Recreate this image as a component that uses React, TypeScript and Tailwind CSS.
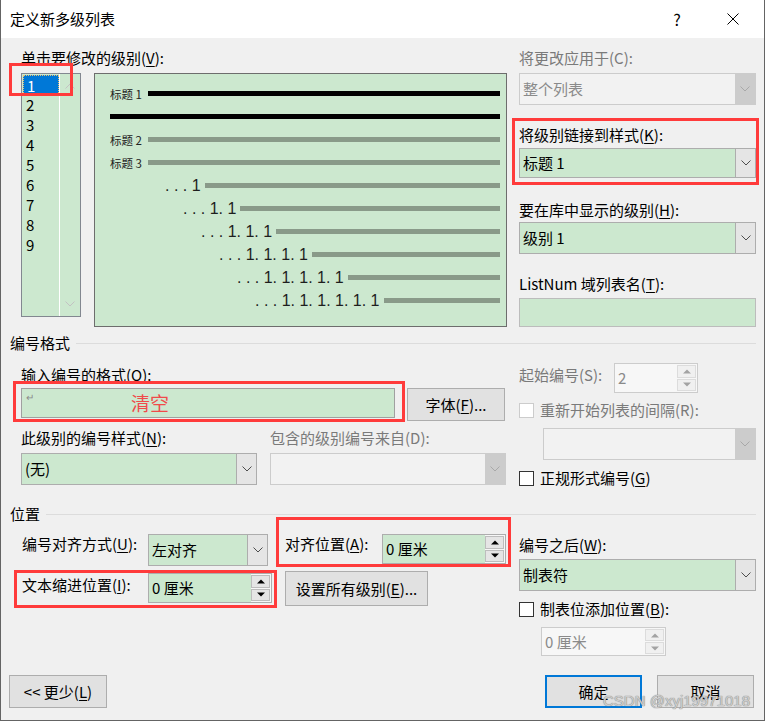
import React from 'react';

const Acc = ({ k }: { k: string }) => (
  <>
    (<span className="underline underline-offset-[2px] decoration-1">{k}</span>)
  </>
);

function Chevron({ c = '#4d4d4d' }: { c?: string }) {
  return (
    <svg width="10" height="6" viewBox="0 0 10 6" fill="none">
      <path d="M0.5 0.5L5 5L9.5 0.5" stroke={c} strokeWidth="1" />
    </svg>
  );
}

function Tri({ up, c }: { up?: boolean; c: string }) {
  return (
    <svg width="8" height="5" viewBox="0 0 8 5">
      <path d={up ? 'M0 4.5L4 0.5L8 4.5Z' : 'M0 0.5L4 4.5L8 0.5Z'} fill={c} />
    </svg>
  );
}

function Red({ className = '' }: { className?: string }) {
  return <span className={`absolute border-[3px] border-[#ff3b3b] pointer-events-none ${className}`} />;
}

function Combo({ text = '', className = '', disabled = false }: { text?: string; className?: string; disabled?: boolean }) {
  return (
    <div
      className={`flex border ${
        disabled ? 'border-[#cccccc] bg-[#f2f2f2] text-[#8a8a8a]' : 'border-[#adadad] bg-[#cce8cf] text-black'
      } ${className}`}
    >
      <div className="flex-1 flex items-center pl-[3px] text-[15px]">{text}</div>
      <div
        className={`w-[20px] flex items-center justify-center ${
          disabled ? 'bg-[#cccccc]' : 'bg-[#e5e5e5] border-l border-[#adadad]'
        }`}
      >
        <Chevron c={disabled ? '#a8a8a8' : '#4d4d4d'} />
      </div>
    </div>
  );
}

function Spin({ text = '', className = '', disabled = false }: { text?: string; className?: string; disabled?: boolean }) {
  const c = disabled ? '#a3a3a3' : '#000000';
  return (
    <div
      className={`flex border ${
        disabled ? 'border-[#cccccc] bg-[#f7f7f7] text-[#8a8a8a]' : 'border-[#adadad] bg-[#cce8cf] text-black'
      } ${className}`}
    >
      <div className="flex-1 flex items-center pl-[3px] text-[15px]">{text}</div>
      <div className="w-[20px] flex flex-col gap-px py-px pr-px bg-[#f7f7f7]">
        <div
          className={`flex-1 flex items-center justify-center border ${
            disabled ? 'border-[#dcdcdc] bg-[#f0f0f0]' : 'border-[#bdbdbd] bg-[#e5e5e5]'
          }`}
        >
          <Tri up c={c} />
        </div>
        <div
          className={`flex-1 flex items-center justify-center border ${
            disabled ? 'border-[#dcdcdc] bg-[#f0f0f0]' : 'border-[#bdbdbd] bg-[#e5e5e5]'
          }`}
        >
          <Tri c={c} />
        </div>
      </div>
    </div>
  );
}

function Check({ disabled = false }: { disabled?: boolean }) {
  return (
    <span
      className={`w-[15px] h-[15px] shrink-0 bg-white border ${disabled ? 'border-[#cccccc]' : 'border-[#333333]'}`}
    />
  );
}

function Btn({ children, className = '', primary = false }: { children: React.ReactNode; className?: string; primary?: boolean }) {
  return (
    <div
      className={`flex items-center justify-center bg-[#e1e1e1] text-[15px] ${
        primary ? 'border-2 border-[#0078d7]' : 'border border-[#adadad]'
      } ${className}`}
    >
      {children}
    </div>
  );
}

function SectionHead({ title, className = '' }: { title: string; className?: string }) {
  return (
    <div className={`h-[20px] flex items-center ${className}`}>
      <span>{title}</span>
      <div className="flex-1 h-px bg-[#dcdcdc] ml-[6px]" />
    </div>
  );
}

function LevelList() {
  const items = ['1', '2', '3', '4', '5', '6', '7', '8', '9'];
  return (
    <div className="relative w-[60px] h-[244px] shrink-0 border border-[#828790] bg-[#cce8cf] flex">
      <div className="w-[37px] flex flex-col pt-px pl-px">
        {items.map((n, i) => (
          <div
            key={n}
            className={`h-[20px] pl-[3px] text-[15px] leading-[20px] ${
              i === 0 ? 'bg-[#0078d7] text-white border border-dotted border-[#e8c070] pl-[2px] leading-[18px]' : 'text-black'
            }`}
          >
            {n}
          </div>
        ))}
      </div>
      <div className="w-px bg-white" />
      <div className="flex-1 flex flex-col items-center justify-between py-[9px]">
        <svg width="10" height="6" viewBox="0 0 10 6" fill="none">
          <path d="M0.5 5.5L5 1L9.5 5.5" stroke="#c2c2c2" strokeWidth="1" />
        </svg>
        <Chevron c="#c2c2c2" />
      </div>
      <Red className="-left-[13px] -top-[11px] w-[64px] h-[33px]" />
    </div>
  );
}

function Preview() {
  const dotted = "font-['Liberation_Sans',sans-serif] text-[16px] text-[#1e1e1e] mr-[4px] whitespace-pre";
  return (
    <div className="ml-[13px] w-[413px] h-[254px] shrink-0 border border-[#6d6d6d] bg-[#cce8cf] pt-[8px] pl-[15px] pr-[6px] flex flex-col">
      <div className="h-[23px] flex items-center">
        <span className="w-[38px] shrink-0 text-[11.5px] text-[#222]">标题 1</span>
        <div className="flex-1 h-[5px] bg-black" />
      </div>
      <div className="h-[23px] flex items-center">
        <div className="flex-1 h-[5px] bg-black" />
      </div>
      <div className="h-[23px] flex items-center">
        <span className="w-[38px] shrink-0 text-[11.5px] text-[#222]">标题 2</span>
        <div className="flex-1 h-[5px] bg-[#899a89]" />
      </div>
      <div className="h-[23px] flex items-center">
        <span className="w-[38px] shrink-0 text-[11.5px] text-[#222]">标题 3</span>
        <div className="flex-1 h-[5px] bg-[#899a89]" />
      </div>
      <div className="h-[23px] flex items-center">
        <span className={`ml-[55px] ${dotted}`}>. . . 1</span>
        <div className="flex-1 h-[5px] bg-[#899a89]" />
      </div>
      <div className="h-[23px] flex items-center">
        <span className={`ml-[73px] ${dotted}`}>. . . 1. 1</span>
        <div className="flex-1 h-[5px] bg-[#899a89]" />
      </div>
      <div className="h-[23px] flex items-center">
        <span className={`ml-[91px] ${dotted}`}>. . . 1. 1. 1</span>
        <div className="flex-1 h-[5px] bg-[#899a89]" />
      </div>
      <div className="h-[23px] flex items-center">
        <span className={`ml-[109px] ${dotted}`}>. . . 1. 1. 1. 1</span>
        <div className="flex-1 h-[5px] bg-[#899a89]" />
      </div>
      <div className="h-[23px] flex items-center">
        <span className={`ml-[127px] ${dotted}`}>. . . 1. 1. 1. 1. 1</span>
        <div className="flex-1 h-[5px] bg-[#899a89]" />
      </div>
      <div className="h-[23px] flex items-center">
        <span className={`ml-[145px] ${dotted}`}>. . . 1. 1. 1. 1. 1. 1</span>
        <div className="flex-1 h-[5px] bg-[#899a89]" />
      </div>
    </div>
  );
}

export default function App() {
  return (
    <div className="relative w-[765px] h-[721px] bg-[#f0f0f0] border-x border-b border-[#646464] flex flex-col text-[15px] leading-[20px] text-black font-['Noto_Sans_CJK_SC',sans-serif]">
      {/* title bar */}
      <div className="h-[38px] shrink-0 bg-white flex items-center pl-[9px]">
        <span>定义新多级列表</span>
        <span className="ml-auto w-[20px] text-center text-[16px]">?</span>
        <svg className="ml-[40px] mr-[25px]" width="12" height="12" viewBox="0 0 12 12">
          <path d="M0.5 0.5L11.5 11.5M11.5 0.5L0.5 11.5" stroke="#000" strokeWidth="1" />
        </svg>
      </div>

      <div className="flex-1 flex flex-col pl-[9px] pr-[8px]">
        {/* levels + preview + link */}
        <div className="flex pl-[11px]">
          <div className="flex flex-col">
            <div className="mt-[10px] h-[20px]">
              单击要修改的级别<Acc k="V" />:
            </div>
            <div className="flex items-start mt-[5px]">
              <LevelList />
              <Preview />
            </div>
          </div>
          <div className="ml-auto w-[237px] flex flex-col">
            <div className="mt-[10px] h-[20px] text-[#7a7a7a]">将更改应用于(C):</div>
            <Combo disabled text="整个列表" className="mt-[5px] h-[32px]" />
            <div className="relative mt-[20px] flex flex-col">
              <div className="h-[20px]">
                将级别链接到样式<Acc k="K" />:
              </div>
              <Combo text="标题 1" className="mt-[3px] h-[30px]" />
              <Red className="-left-[7px] -right-[3px] -top-[7px] -bottom-[7px]" />
            </div>
            <div className="mt-[22px] h-[20px]">
              要在库中显示的级别<Acc k="H" />:
            </div>
            <Combo text="级别 1" className="mt-[2px] h-[32px]" />
            <div className="mt-[20px] h-[20px]">
              ListNum 域列表名<Acc k="T" />:
            </div>
            <div className="mt-[4px] h-[29px] border border-[#bcbcbc] bg-[#cce8cf]" />
          </div>
        </div>

        {/* 编号格式 */}
        <SectionHead title="编号格式" className="mt-[6px]" />
        <div className="flex items-start pl-[11px]">
          <div className="w-[486px] flex flex-col">
            <div className="mt-[12px] h-[20px]">
              输入编号的格式<Acc k="O" />:
            </div>
            <div className="mt-[3px] flex items-start">
              <div className="relative">
                <div className="w-[374px] h-[30px] border border-[#a0a0a0] bg-[#cce8cf] flex items-center">
                  <span className="self-start mt-[2px] ml-[4px] text-[10px] leading-[12px] text-[#8a8a8a]">↵</span>
                  <span className="ml-[97px] text-[19px] text-[#f04a4a]">清空</span>
                </div>
                <Red className="-left-[8px] -top-[7px] -right-[10px] -bottom-[4px]" />
              </div>
              <Btn className="ml-[12px] w-[98px] h-[33px]">
                字体<Acc k="F" />...
              </Btn>
            </div>
            <div className="mt-[7px] flex h-[20px]">
              <div className="w-[249px]">
                此级别的编号样式<Acc k="N" />:
              </div>
              <div className="text-[#7a7a7a]">包含的级别编号来自(D):</div>
            </div>
            <div className="mt-[5px] flex">
              <Combo text="(无)" className="w-[236px] h-[32px]" />
              <Combo disabled className="ml-[13px] w-[236px] h-[32px]" />
            </div>
          </div>
          <div className="ml-auto w-[237px] flex flex-col">
            <div className="mt-[10px] h-[30px] flex items-center">
              <span className="w-[95px] mb-[6px] text-[#7a7a7a]">起始编号(S):</span>
              <Spin disabled text="2" className="w-[84px] h-[30px]" />
            </div>
            <div className="mt-[7px] h-[20px] flex items-center">
              <Check disabled />
              <span className="ml-[6px] text-[#7a7a7a]">重新开始列表的间隔(R):</span>
            </div>
            <Combo disabled className="mt-[8px] ml-[24px] w-[213px] h-[32px]" />
            <div className="mt-[8px] h-[20px] flex items-center">
              <Check />
              <span className="ml-[6px]">
                正规形式编号<Acc k="G" />
              </span>
            </div>
          </div>
        </div>

        {/* 位置 */}
        <SectionHead title="位置" className="mt-[16px]" />
        <div className="flex items-start pl-[11px]">
          <div className="w-[486px] flex flex-col">
            <div className="mt-[10px] h-[32px] flex items-start">
              <span className="w-[127px] pl-px">
                编号对齐方式<Acc k="U" />:
              </span>
              <Combo text="左对齐" className="w-[120px] h-[32px]" />
              <div className="relative ml-[17px] flex items-start">
                <span className="w-[97px]">
                  对齐位置<Acc k="A" />:
                </span>
                <Spin text="0 厘米" className="w-[124px] h-[30px]" />
                <Red className="-left-[9px] -right-[5px] -top-[17px] -bottom-[3px]" />
              </div>
            </div>
            <div className="mt-[5px] h-[35px] flex items-start">
              <div className="relative flex items-start">
                <span className="mt-[4px] w-[127px] pl-px">
                  文本缩进位置<Acc k="I" />:
                </span>
                <Spin text="0 厘米" className="mt-[2px] w-[124px] h-[30px]" />
                <Red className="-left-[7px] -right-[5px] -top-[1px] -bottom-[5px]" />
              </div>
              <Btn className="ml-[13px] w-[143px] h-[35px]">
                设置所有级别<Acc k="E" />...
              </Btn>
            </div>
          </div>
          <div className="ml-auto w-[237px] flex flex-col">
            <div className="mt-[11px] h-[20px]">
              编号之后<Acc k="W" />:
            </div>
            <Combo text="制表符" className="mt-[4px] h-[32px]" />
            <div className="mt-[8px] h-[20px] flex items-center">
              <Check />
              <span className="ml-[6px]">
                制表位添加位置<Acc k="B" />:
              </span>
            </div>
            <Spin disabled text="0 厘米" className="mt-[8px] ml-[22px] w-[125px] h-[29px]" />
          </div>
        </div>

        {/* buttons */}
        <div className="mt-auto pb-[12px] flex">
          <Btn className="-ml-px w-[98px] h-[33px]">
            &lt;&lt; 更少<Acc k="L" />
          </Btn>
          <Btn primary className="ml-auto w-[97px] h-[33px]">
            确定
          </Btn>
          <Btn className="ml-[15px] mr-[2px] w-[97px] h-[33px]">取消</Btn>
        </div>
      </div>

      <span className="absolute right-[14px] bottom-[9px] font-['Liberation_Sans',sans-serif] text-[15px] text-[#cdcdcd] [text-shadow:0_0_1px_#8a8a8a,0_0_1px_#8a8a8a]">
        CSDN @xyj19971018
      </span>
    </div>
  );
}
